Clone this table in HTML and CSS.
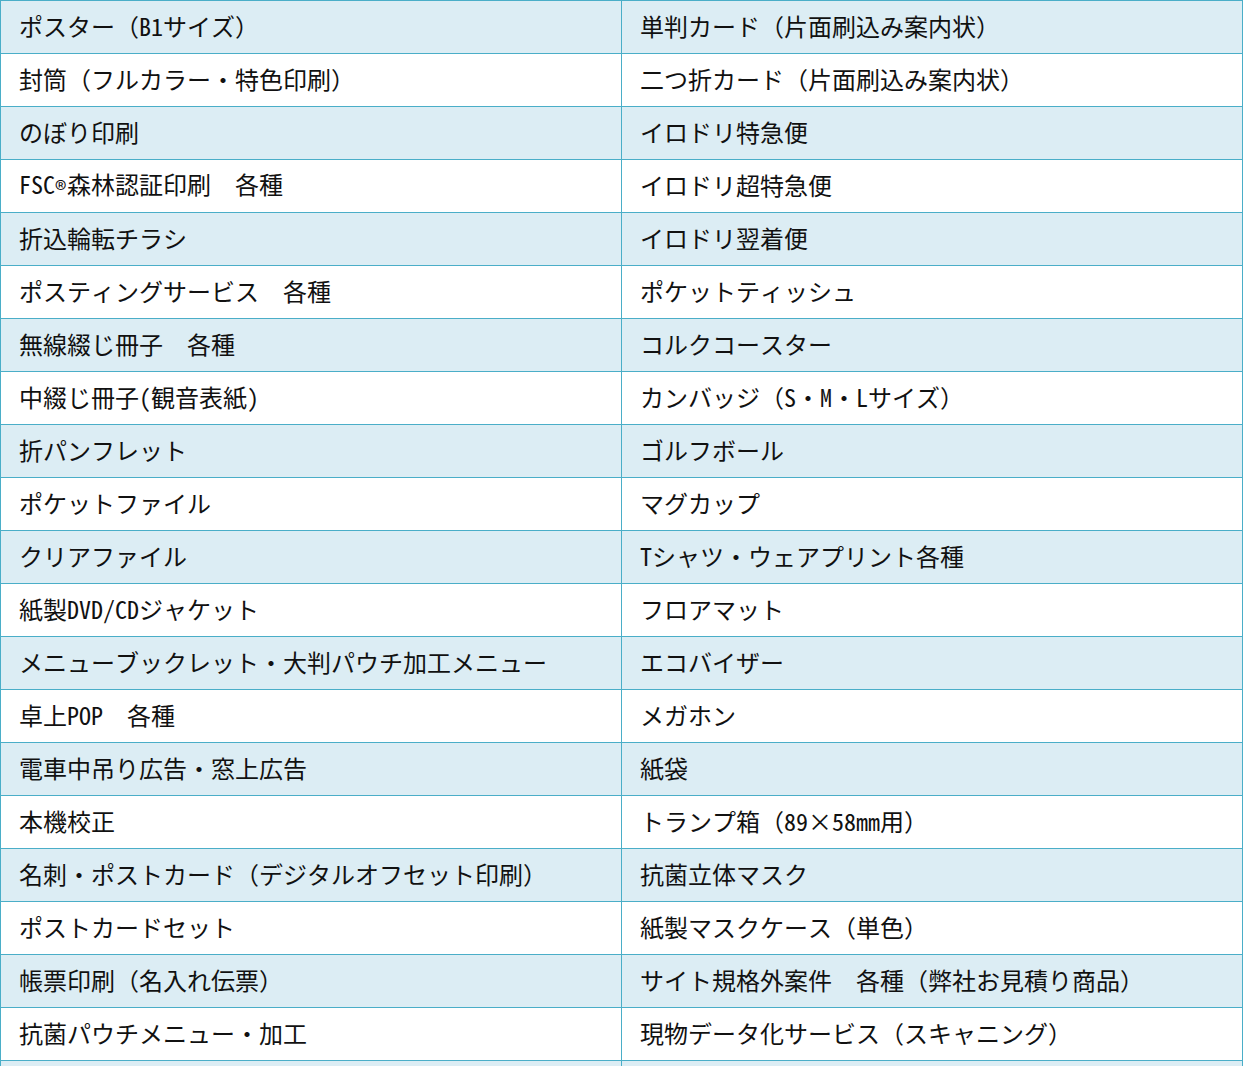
FILE: index.html
```html
<!DOCTYPE html>
<html lang="ja">
<head>
<meta charset="utf-8">
<link rel="stylesheet" href="styles.css">
</head>
<body>
<table class="list">
<tbody>
<tr><td>ポスター（B1サイズ）</td><td>単判カード（片面刷込み案内状）</td></tr>
<tr><td>封筒（フルカラー・特色印刷）</td><td>二つ折カード（片面刷込み案内状）</td></tr>
<tr><td>のぼり印刷</td><td>イロドリ特急便</td></tr>
<tr><td>FSC<span class="reg">®</span>森林認証印刷　各種</td><td>イロドリ超特急便</td></tr>
<tr><td>折込輪転チラシ</td><td>イロドリ翌着便</td></tr>
<tr><td>ポスティングサービス　各種</td><td>ポケットティッシュ</td></tr>
<tr><td>無線綴じ冊子　各種</td><td>コルクコースター</td></tr>
<tr><td>中綴じ冊子(観音表紙)</td><td>カンバッジ（S・M・Lサイズ）</td></tr>
<tr><td>折パンフレット</td><td>ゴルフボール</td></tr>
<tr><td>ポケットファイル</td><td>マグカップ</td></tr>
<tr><td>クリアファイル</td><td>Tシャツ・ウェアプリント各種</td></tr>
<tr><td>紙製DVD/CDジャケット</td><td>フロアマット</td></tr>
<tr><td>メニューブックレット・大判パウチ加工メニュー</td><td>エコバイザー</td></tr>
<tr><td>卓上POP　各種</td><td>メガホン</td></tr>
<tr><td>電車中吊り広告・窓上広告</td><td>紙袋</td></tr>
<tr><td>本機校正</td><td>トランプ箱（89×58mm用）</td></tr>
<tr><td>名刺・ポストカード（デジタルオフセット印刷）</td><td>抗菌立体マスク</td></tr>
<tr><td>ポストカードセット</td><td>紙製マスクケース（単色）</td></tr>
<tr><td>帳票印刷（名入れ伝票）</td><td>サイト規格外案件　各種（弊社お見積り商品）</td></tr>
<tr><td>抗菌パウチメニュー・加工</td><td>現物データ化サービス（スキャニング）</td></tr>
<tr><td>&nbsp;</td><td>&nbsp;</td></tr>
</tbody>
</table>
</body>
</html>
```
FILE: styles.css
```css
html, body {
  margin: 0;
  padding: 0;
  background: #ffffff;
}
body {
  font-family: "Noto Sans Mono CJK JP", "Noto Sans CJK JP", "Noto Sans", sans-serif;
  color: #111111;
}
.list {
  width: 1243px;
  border-collapse: collapse;
  table-layout: fixed;
}
.list td {
  border: 1px solid #4aaec8;
  height: 53px;
  box-sizing: border-box;
  padding: 0 0 3px 18px;
  font-size: 24px;
  line-height: 30px;
  vertical-align: middle;
  white-space: nowrap;
}
.list tr:nth-child(odd) td {
  background: #dcedf4;
}
.list tr td:first-child {
  width: 621px;
}
.reg {
  display: inline-block;
  width: 12px;
  line-height: 1;
  vertical-align: -5px;
}
```
